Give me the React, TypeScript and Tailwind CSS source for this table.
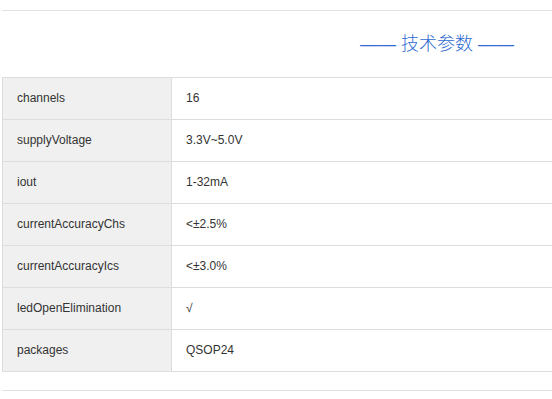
import React from "react";

const specs: [string, string][] = [
  ["channels", "16"],
  ["supplyVoltage", "3.3V~5.0V"],
  ["iout", "1-32mA"],
  ["currentAccuracyChs", "<±2.5%"],
  ["currentAccuracyIcs", "<±3.0%"],
  ["ledOpenElimination", "√"],
  ["packages", "QSOP24"],
];

export default function App() {
  return (
    <div className="w-[552px] h-[399px] overflow-hidden bg-white font-['Liberation_Sans',Arial,sans-serif]">
      <div className="ml-[2px] w-[870px] mt-[10px] border-t border-[#e3e3e3]">
        {/* Section title */}
        <div className="h-[66px] flex items-center justify-center pb-[2px]">
          <span className="text-[18px] text-[#2f6bd1] leading-none whitespace-pre">
            ——{" "}
            <span className="font-['Noto_Sans_CJK_SC',sans-serif] font-light">技术参数</span>
            {" "}——
          </span>
        </div>

        <table className="w-full border-collapse text-[12px] text-[#333]">
          <tbody>
            {specs.map(([k, v]) => (
              <tr key={k} className="h-[42px]">
                <td className="w-[169px] border border-[#dddddd] bg-[#f0f0f0] pl-[14px] pb-[2px]">{k}</td>
                <td className="border border-[#dddddd] pl-[14px] pb-[2px]">{v}</td>
              </tr>
            ))}
          </tbody>
        </table>

        <div className="mt-[18px] border-t border-[#e3e3e3]" />
      </div>
    </div>
  );
}
